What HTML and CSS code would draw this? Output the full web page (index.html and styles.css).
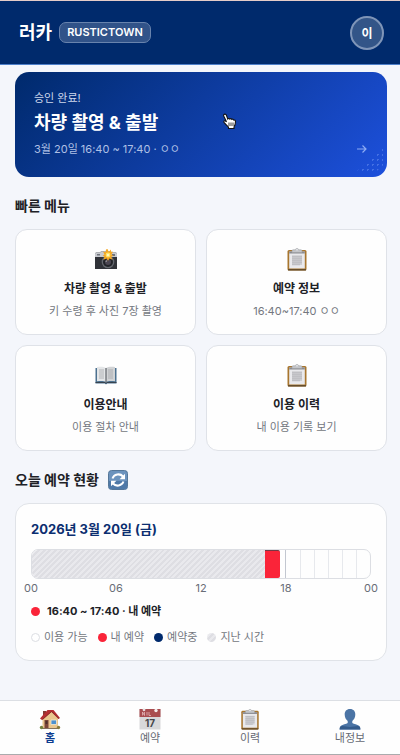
FILE: index.html
```html
<!DOCTYPE html>
<html lang="ko">
<head>
  <meta charset="UTF-8">
  <meta name="viewport" content="width=device-width, initial-scale=1">
  <title>러카</title>
  <link rel="stylesheet" href="styles.css">
</head>
<body>
  <svg class="icon-defs" aria-hidden="true">
    <symbol id="icon-clipboard" viewBox="0 0 24 24">
      <rect x="2.5" y="3" width="19" height="20.5" rx="1.5" fill="#a8762f"/>
      <path d="M3 22.8h18" stroke="#604a2c" stroke-width="1.4"/>
      <rect x="4.2" y="4.5" width="15.6" height="17" fill="#e9e9ec"/>
      <path d="M4.2 4.5h15.6v2H4.2z" fill="#8b8c92"/>
      <path d="M7 8.500h10v9.500H7z" fill="#cfcfd2"/>
      <path d="M7 9.500h10M7 11.500h10M7 13.500h10M7 15.500h10M7 17.500h8" stroke="#bfbfc3" stroke-width="1.3"/>
      <path d="M7 5.500V3.800c0-.6.5-1 1-1h2.200a1.900 1.900 0 0 1 3.600 0H16c.5 0 1 .4 1 1v1.700z" fill="#c3c5c9" stroke="#96989d" stroke-width=".5"/>
      <circle cx="12" cy="2.7" r=".7" fill="#f7f7f8"/>
    </symbol>
  </svg>

  <header class="header">
    <div class="brand">
      <h1 class="brand-name">러카</h1>
      <span class="brand-badge">RUSTICTOWN</span>
    </div>
    <button class="avatar" type="button" aria-label="내정보">이</button>
  </header>

  <main class="main">
    <a class="hero" href="#checkout">
      <span class="hero-label">승인 완료!</span>
      <strong class="hero-title">차량 촬영 &amp; 출발</strong>
      <span class="hero-bottom">
        <span>3월 20일 16:40 ~ 17:40 · ㅇㅇ</span>
        <svg class="hero-arrow" viewBox="0 0 12 12" aria-hidden="true">
          <path d="M1 6h9M6.500 2.500 10 6 6.500 9.500" fill="none" stroke="currentColor" stroke-width="1.200"/>
        </svg>
      </span>
      <span class="hero-dots"></span>
      <svg class="pointer" viewBox="0 0 15 17" aria-hidden="true">
        <path d="M2 1.500c1-.8 2-.2 2.400.8L5.800 6c.5-.8 1.600-.7 2 .1.600-.7 1.700-.5 2 .3.700-.5 1.700-.2 1.900.7.900-.3 1.800.3 1.800 1.300 0 3-.5 4.200-1.500 5.600v1.500H6.500v-1.300C5 12.600 3.500 11 2 9.300c-.7-1 .5-2 1.500-1.300l1 .7L1.700 3c-.3-.6-.2-1.100.3-1.500z" fill="#fff" stroke="#111" stroke-width="1.100"/>
        <path d="M7 9.500v3.500M9 9.500v3.500M11 9.500v3.500" stroke="#222" stroke-width=".9"/>
      </svg>
    </a>

    <h2 class="section-title">빠른 메뉴</h2>
    <nav class="menu-grid" aria-label="빠른 메뉴">
      <a class="menu-card" href="#checkout">
        <svg class="menu-icon" viewBox="0 0 24 24" aria-hidden="true">
          <path d="M2 5.500h4l1-1h10l1 1h4l1 1V22H1V6.500z" fill="#303238"/>
          <path d="M2 5.500h4l1-1h10l1 1h4l1 1V10H1V6.500z" fill="#c9cbd0"/>
          <path d="M3 7h3v1.500H3zM18 7h3v2h-3z" fill="#70747c"/>
          <circle cx="14" cy="15" r="6.300" fill="#65686f"/>
          <circle cx="14" cy="15" r="5" fill="#222429"/>
          <circle cx="14" cy="15" r="3" fill="#4b4652"/>
          <path d="m12 15 .5-1.500" stroke="#aaa" stroke-width="1"/>
          <path d="m13.500 2 1.300 3L17 2.500V5l2-.5-1.500 3 1.700 1.500-2 .8 1.300 3-3-1.300-1.500 2.300-1.500-2.300-3 1.300 1-3-1.800-1 1.800-1.300L9 4.500l2.500.7.500-2.700z" fill="#f4a823"/>
          <circle cx="14" cy="8" r="2.400" fill="#ffe569"/>
          <circle cx="14" cy="8" r="1.100" fill="#fffbd5"/>
        </svg>
        <strong class="menu-name">차량 촬영 &amp; 출발</strong>
        <span class="menu-desc">키 수령 후 사진 7장 촬영</span>
      </a>
      <a class="menu-card" href="#reservation">
        <svg class="menu-icon" aria-hidden="true"><use href="#icon-clipboard"/></svg>
        <strong class="menu-name">예약 정보</strong>
        <span class="menu-desc">16:40~17:40 ㅇㅇ</span>
      </a>
      <a class="menu-card" href="#guide">
        <svg class="menu-icon" viewBox="0 0 24 24" aria-hidden="true">
          <path d="M1.500 5h21v15.500H13l-1 1-1-1H1.500z" fill="#4c718f"/>
          <path d="M1.500 19.500H11l1 1 1-1h9.500" fill="none" stroke="#38434f"/>
          <path d="M3 4c3.500-.5 7-.3 9 1v14c-2-1.200-5.500-1.200-9-.7z" fill="#e4e6e8"/>
          <path d="M21 4c-3.500-.5-7-.3-9 1v14c2-1.200 5.500-1.200 9-.7z" fill="#d1d3d5"/>
          <path d="M5 7h5M5 9h5M5 11h5M5 13h5M5 15h5M14 7h5M14 9h5M14 11h5M14 13h5M14 15h5" stroke="#a3a6aa" stroke-width=".8"/>
          <path d="M12 5v15" stroke="#60646a" stroke-width="1.200"/>
        </svg>
        <strong class="menu-name">이용안내</strong>
        <span class="menu-desc">이용 절차 안내</span>
      </a>
      <a class="menu-card" href="#history">
        <svg class="menu-icon" aria-hidden="true"><use href="#icon-clipboard"/></svg>
        <strong class="menu-name">이용 이력</strong>
        <span class="menu-desc">내 이용 기록 보기</span>
      </a>
    </nav>

    <div class="section-row">
      <h2 class="section-title">오늘 예약 현황</h2>
      <button class="refresh" type="button" aria-label="새로고침">
        <svg viewBox="0 0 20 20" aria-hidden="true">
          <rect x=".5" y=".5" width="19" height="19" rx="3" fill="#6c93bd" stroke="#557799"/>
          <path d="M1 11h18v5.500a2.500 2.500 0 0 1-2.500 2.500h-13A2.500 2.500 0 0 1 1 16.500z" fill="#4f79a8"/>
          <path d="M4.500 8.500C6 4 12 3 15 6.500M15.500 11.500C14 16 8 17 5 13.500" fill="none" stroke="#fff" stroke-width="2"/>
          <path d="M17 3.800v5.400h-5.400zM3 16.200v-5.400h5.400z" fill="#fff"/>
        </svg>
      </button>
    </div>

    <section class="schedule">
      <h3 class="schedule-date">2026년 3월 20일 (금)</h3>
      <div class="timeline">
        <div class="timeline-past" style="width: 68.8%"></div>
        <div class="timeline-mine" style="width: 4.7%"></div>
        <div class="timeline-gap" style="width: 1.5%"></div>
        <div class="timeline-free">
          <i></i><i></i><i></i><i></i><i></i><i></i>
        </div>
      </div>
      <div class="hours">
        <span>00</span><span>06</span><span>12</span><span>18</span><span>00</span>
      </div>
      <p class="my-booking"><i class="dot dot-mine"></i>16:40 ~ 17:40 · 내 예약</p>
      <ul class="legend">
        <li><i class="dot dot-free"></i>이용 가능</li>
        <li><i class="dot dot-mine"></i>내 예약</li>
        <li><i class="dot dot-booked"></i>예약중</li>
        <li><i class="dot dot-past"></i>지난 시간</li>
      </ul>
    </section>
  </main>

  <nav class="tabbar" aria-label="하단 메뉴">
    <a class="tab tab-active" href="#home">
      <svg viewBox="0 0 22 22" aria-hidden="true">
        <path d="M4 3h3v6H4z" fill="#833c36"/>
        <path d="M3.500 10 12 3l7 7v10.500H3.500z" fill="#e9c68e"/>
        <path d="M1 10.500 8.500 2h6L21 10l-1.500 1-7-7L3 12z" fill="#b52f32"/>
        <path d="m12.500 3.500-9 8M12.500 3.500l7.500 7" stroke="#7d2427" stroke-width=".8"/>
        <path d="M5.500 12h4v8.500h-4z" fill="#7b4638"/>
        <path d="M6.500 13h2v3h-2z" fill="#4e302b"/>
        <path d="M12 12h5.500v4.500H12z" fill="#4d91cf" stroke="#f5ead0" stroke-width=".8"/>
        <path d="M3 20.500h17" stroke="#84715b"/>
        <circle cx="2.500" cy="19.500" r="1.700" fill="#74813d"/>
        <circle cx="19.500" cy="19.500" r="1.700" fill="#8a7a3b"/>
      </svg>
      <span>홈</span>
    </a>
    <a class="tab" href="#reserve">
      <svg viewBox="0 0 22 22" aria-hidden="true">
        <path d="M.5 1h21v20.500H.5z" fill="#d8d8da"/>
        <path d="M.5 1h21v8H.5z" fill="#a94d50"/>
        <path d="M3.500 7.500V4l2 3.500V4M8 7.500V4M10 4v3.500h2" fill="none" stroke="#e5b8b9" stroke-width=".8"/>
        <circle cx="5" cy="1.800" r="1.400" fill="#e9e2e3"/>
        <circle cx="17" cy="2.500" r="1.700" fill="#f4eeee"/>
        <text class="calendar-day" x="11" y="19" text-anchor="middle">17</text>
      </svg>
      <span>예약</span>
    </a>
    <a class="tab" href="#history">
      <svg aria-hidden="true"><use href="#icon-clipboard"/></svg>
      <span>이력</span>
    </a>
    <a class="tab" href="#profile">
      <svg viewBox="0 0 22 22" aria-hidden="true">
        <path d="M11 1c3.500 0 5.500 2.300 5.300 5.800-.1 2.800-1.300 5-3 6.200v2c1.500 1.200 5.200 1.400 6.700 2.700 1 .9 1.300 2 1.400 3.800H.6c.1-1.800.4-2.900 1.400-3.800 1.500-1.300 5.200-1.500 6.700-2.700v-2c-1.700-1.200-2.900-3.400-3-6.200C5.500 3.300 7.500 1 11 1z" fill="#4b74a5"/>
        <path d="M1 19c2-2 6 0 10 0s8-2 10 0l.4 2.500H.6z" fill="#345b8b"/>
      </svg>
      <span>내정보</span>
    </a>
  </nav>
</body>
</html>
```

FILE: styles.css
```css
* {
  box-sizing: border-box;
}

body {
  margin: 0;
  min-height: 100vh;
  display: flex;
  flex-direction: column;
  background: #f4f6fb;
  color: #202126;
  font-family: Inter, "Noto Sans CJK KR", sans-serif;
  font-size: 11px;
  line-height: 16px;
}

h1, h2, h3, p, ul {
  margin: 0;
  padding: 0;
}

a {
  color: inherit;
  text-decoration: none;
}

button {
  padding: 0;
  font-family: inherit;
  cursor: pointer;
}

.icon-defs {
  display: none;
}

/* header */
.header {
  display: flex;
  align-items: center;
  justify-content: space-between;
  height: 65px;
  padding: 0 16px 0 19px;
  background: #002a6c;
  border-top: 1px solid #e5ccc8;
  border-bottom: 1px solid #4d7fc9;
  color: #fff;
}

.brand {
  display: flex;
  align-items: center;
  gap: 7px;
}

.brand-name {
  font-size: 18px;
  line-height: 24px;
}

.brand-badge {
  padding: 1px 7px;
  border: 1px solid #6883ad;
  border-radius: 7px;
  background: #315389;
  line-height: 17px;
  font-weight: 600;
}

.avatar {
  width: 34px;
  height: 34px;
  border: 2px solid #7f95b8;
  border-radius: 50%;
  background: #335588;
  color: #fff;
  font-size: 12px;
  font-weight: 700;
}

/* content */
.main {
  flex: 1;
  padding: 7px 13px 30px 15px;
}

.hero {
  position: relative;
  display: flex;
  flex-direction: column;
  padding: 18px 19px 20px;
  border-radius: 14px;
  background: linear-gradient(135deg, #002a6c, #1d50dc);
  color: #fff;
}

.hero-label {
  color: #ced8ec;
}

.hero-title {
  margin: 4px 0 5px;
  font-size: 18px;
  line-height: 26px;
}

.hero-bottom {
  display: flex;
  align-items: center;
  justify-content: space-between;
  color: #afc0e5;
}

.hero-arrow {
  width: 12px;
  height: 12px;
  color: #8dacf4;
}

.hero-dots {
  position: absolute;
  right: 4px;
  bottom: 4px;
  width: 28px;
  height: 26px;
  background: radial-gradient(circle, #5f87ed 0 1px, transparent 1px) 0 0 / 5px 5px;
  clip-path: polygon(100% 0, 100% 70%, 70% 100%, 0 100%);
  opacity: 0.6;
}

.pointer {
  position: absolute;
  left: 207px;
  top: 41px;
  width: 15px;
  height: 17px;
}

.section-title {
  margin: 18px 0 12px;
  font-size: 14px;
  line-height: 22px;
}

.menu-grid {
  display: grid;
  grid-template-columns: 1fr 1fr;
  gap: 10px;
}

.menu-card {
  display: flex;
  flex-direction: column;
  align-items: center;
  padding: 17px 8px 14px;
  border: 1px solid #dfe2e8;
  border-radius: 12px;
  background: #fefefe;
}

.menu-icon {
  width: 24px;
  height: 24px;
}

.menu-name {
  margin: 8px 0 4px;
  font-size: 12px;
  line-height: 20px;
}

.menu-desc {
  color: #737780;
  line-height: 17px;
}

.section-row {
  display: flex;
  align-items: center;
  gap: 9px;
}

.refresh {
  width: 20px;
  height: 20px;
  margin-top: 6px;
  border: 0;
  background: none;
}

.refresh svg {
  display: block;
}

/* today's timeline */
.schedule {
  padding: 15px;
  border: 1px solid #e0e3e8;
  border-radius: 14px;
  background: #fefefe;
}

.schedule-date {
  color: #0b2e70;
  font-size: 13px;
  line-height: 20px;
}

.timeline {
  display: flex;
  height: 30px;
  margin-top: 10px;
  overflow: hidden;
  border: 1px solid #dcdee3;
  border-radius: 7px;
}

.timeline-past,
.dot-past {
  background: repeating-linear-gradient(135deg, #dedee3 0 2px, #e9e9ed 2px 4px);
}

.timeline-mine {
  border-top: 1px solid #743944;
  border-radius: 0 2px 2px 0;
  background: #fa2439;
}

.timeline-free {
  display: flex;
  flex: 1;
}

.timeline-free i {
  flex: 1;
  border-left: 1px solid #e7e9ed;
}

.timeline-free i:first-child {
  border-left-color: #c3c7d0;
}

.hours {
  display: flex;
  justify-content: space-between;
  margin: 1px -8px 0;
  color: #696d77;
}

.hours span {
  width: 16px;
  text-align: center;
}

.my-booking {
  display: flex;
  align-items: center;
  gap: 7px;
  margin-top: 7px;
  font-weight: 700;
}

.legend {
  display: flex;
  flex-wrap: wrap;
  gap: 10px;
  margin-top: 10px;
  color: #737780;
  list-style: none;
}

.legend li {
  display: flex;
  align-items: center;
  gap: 4px;
}

.dot {
  width: 9px;
  height: 9px;
  border-radius: 50%;
}

.dot-mine {
  background: #fa2439;
}

.dot-free {
  border: 1px solid #dcdee3;
  background: #fff;
}

.dot-booked {
  background: #002a6c;
}

/* bottom tabs */
.tabbar {
  display: grid;
  grid-template-columns: repeat(4, 1fr);
  padding: 7px 0 8px;
  border-top: 1px solid #dcdfe4;
  border-bottom: 1px solid #aaabad;
  background: #fefefe;
}

.tab {
  display: flex;
  flex-direction: column;
  align-items: center;
  color: #656973;
}

.tab svg {
  width: 22px;
  height: 22px;
}

.tab-active {
  color: #0c3c90;
  font-weight: 700;
}

.calendar-day {
  fill: #45464a;
  font-size: 10px;
  font-weight: 700;
}
```
